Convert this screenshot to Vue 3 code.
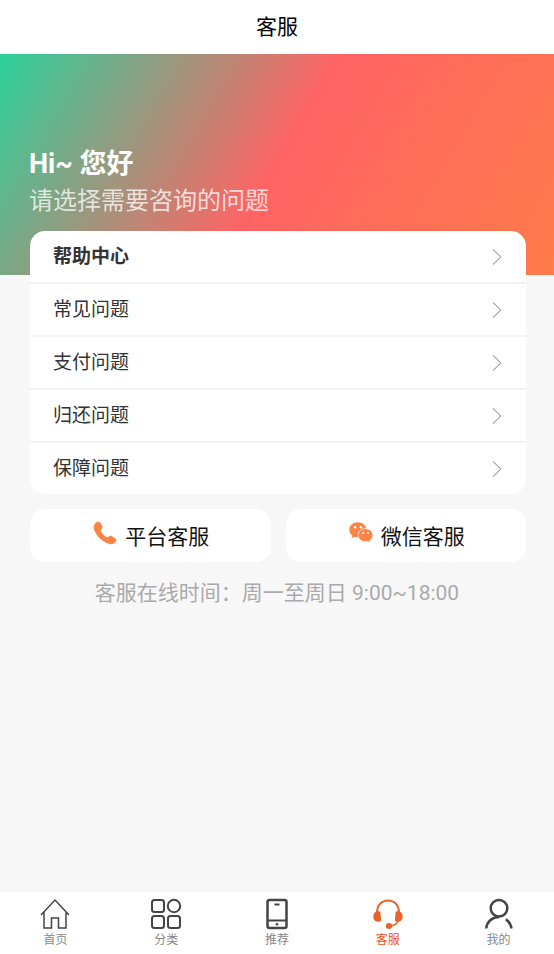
<script setup>
const questions = ['常见问题', '支付问题', '归还问题', '保障问题']
const tabs = [
  { id: 'home', label: '首页' },
  { id: 'category', label: '分类' },
  { id: 'recommend', label: '推荐' },
  { id: 'service', label: '客服' },
  { id: 'mine', label: '我的' },
]
const active = 'service'
</script>

<template>
  <div class="page">
    <header class="topbar"><h1>客服</h1></header>

    <main class="content">
      <section class="hero">
        <h2>Hi~ 您好</h2>
        <p>请选择需要咨询的问题</p>
      </section>

      <nav class="card" aria-label="帮助中心">
        <a class="row lead" href="#help">
          <span>帮助中心</span>
          <svg class="arrow" viewBox="0 0 10 18"><path d="M1 1.5 8.8 9 1 16.5" /></svg>
        </a>
        <a v-for="q in questions" :key="q" class="row" href="#question">
          <span>{{ q }}</span>
          <svg class="arrow" viewBox="0 0 10 18"><path d="M1 1.5 8.8 9 1 16.5" /></svg>
        </a>
      </nav>

      <div class="contacts">
        <button type="button" class="contact">
          <svg class="contact-icon" viewBox="0 0 24 24">
            <path d="M2.3 2.2C4 .5 6 .1 7.2 1.7L9 4.6c.9 1.5.5 2.7-.6 3.7-.8.8-.8 1.5-.2 2.5 1.3 2.2 2.9 3.8 5 5.1 1 .6 1.7.6 2.5-.2 1.1-1 2.4-1.2 3.7-.3l2.8 1.9c1.6 1.2 1.4 2.8-.1 4.3-1.7 1.7-4.2 2-7 .9C8.6 20 3.7 15.1 1.4 9.4.3 6.5.5 4 2.3 2.2Z" />
          </svg>
          <span>平台客服</span>
        </button>
        <button type="button" class="contact">
          <svg class="contact-icon" viewBox="0 0 24 24">
            <path d="M8.8 1.2C4 1.2.3 4.5.3 8.7c0 2.4 1.2 4.4 3.1 5.8l-.9 2.7 3.2-1.5c1 .3 2 .5 3.1.5 4.800 0 8.500-3.300 8.500-7.500s-3.700-7.500-8.500-7.500Z" />
            <path class="front" d="M16.6 7.700c-4.200 0-7.400 2.800-7.400 6.500s3.200 6.500 7.400 6.500c.9 0 1.700-.1 2.500-.4l2.700 1.500-.6-2.500c1.700-1.200 2.700-3 2.700-5.100 0-3.700-3.200-6.500-7.300-6.500Z" />
            <g class="eyes">
              <circle cx="6" cy="6.300" r="1.200" /><circle cx="11.800" cy="6.300" r="1.200" />
              <circle cx="14.200" cy="12" r="1.100" /><circle cx="19" cy="12" r="1.100" />
            </g>
          </svg>
          <span>微信客服</span>
        </button>
      </div>

      <p class="hours">客服在线时间：周一至周日 9:00~18:00</p>
    </main>

    <nav class="tabbar" aria-label="主导航">
      <a
        v-for="tab in tabs"
        :key="tab.id"
        :href="'#' + tab.id"
        class="tab"
        :class="[tab.id, { active: tab.id === active }]"
      >
        <svg v-if="tab.id === 'home'" class="tab-icon" viewBox="0 0 32 32">
          <path d="M2 17 16 2l14 15M5 14v16h7.500V20h7v10H27V14" />
        </svg>
        <svg v-else-if="tab.id === 'category'" class="tab-icon" viewBox="0 0 32 32">
          <rect x="2" y="2" width="12" height="12" rx="2.5" />
          <circle cx="24" cy="8" r="6.2" />
          <rect x="2" y="18" width="12" height="12" rx="2.5" />
          <rect x="18" y="18" width="12" height="12" rx="2.5" />
        </svg>
        <svg v-else-if="tab.id === 'recommend'" class="tab-icon" viewBox="0 0 32 32">
          <rect x="6.5" y="2" width="19" height="28" rx="2" />
          <path class="detail" d="M6.5 22.5h19M13.500 6.500h5" />
          <circle class="solid" cx="16" cy="26.300" r="1.3" />
        </svg>
        <svg v-else-if="tab.id === 'service'" class="tab-icon" viewBox="0 0 32 32">
          <path d="M5 15C5 7 9.500 2.500 16 2.500S27 7 27 15" />
          <path class="thin" d="M26.500 22c-1 3.500-3.500 5.500-8 6" />
          <path class="solid" d="M4.5 13.500 7 13.300c1 0 1.400.5 1.500 1.500l.6 7c.1 1.200-.4 1.900-1.600 1.900-4 .2-6.200-1.700-6.200-5 0-2.500 1-4.300 3.200-5.200ZM27.500 13.500 25 13.300c-1 0-1.400.5-1.500 1.500l-.6 7c-.1 1.200.4 1.900 1.600 1.900 4 .2 6.200-1.700 6.200-5 0-2.500-1-4.300-3.200-5.200Z" />
          <ellipse class="solid" cx="17" cy="28" rx="3.200" ry="2.900" />
        </svg>
        <svg v-else class="tab-icon" viewBox="0 0 32 32">
          <circle cx="16" cy="10.300" r="8.300" />
          <path d="M3.200 30.500C3.800 24 9 18.900 16 18.900M22.800 21.200c3 2 5 5.200 5.700 9.300" />
        </svg>
        <span>{{ tab.label }}</span>
      </a>
    </nav>
  </div>
</template>

<style>
body {
  background: #f7f7f7;
}
</style>

<style scoped>
.page {
  display: flex;
  flex-direction: column;
  min-height: 100vh;
  background: #f7f7f7;
  color: #222;
  font-family: Roboto, "Noto Sans CJK SC", sans-serif;
}
h1, h2, p {
  margin: 0;
  font-weight: 400;
}
a {
  color: inherit;
  text-decoration: none;
}
svg {
  fill: none;
  stroke: currentColor;
}
.topbar {
  display: flex;
  align-items: center;
  justify-content: center;
  height: 54px;
  background: #fff;
  color: #000;
}
h1 {
  font-size: 21px;
  line-height: 54px;
}
.content {
  flex: 1;
}
.hero {
  box-sizing: border-box;
  height: 221px;
  padding: 92px 29px 0;
  background: linear-gradient(120deg, #2bd19b 0%, #ff6464 50%, #ff7b4a 100%);
  color: #fff;
}
.hero h2 {
  font-size: 27px;
  font-weight: 700;
  line-height: 36px;
}
.hero p {
  font-size: 24px;
  line-height: 38px;
  color: rgba(255, 255, 255, 0.75);
}
.card {
  margin: -44px 28px 0 30px;
  border-radius: 15px;
  background: #fff;
  overflow: hidden;
}
.row {
  display: flex;
  align-items: center;
  justify-content: space-between;
  height: 51px;
  padding: 0 24px 0 23px;
  border-bottom: 2px solid #f2f2f2;
  color: #333;
  font-size: 19px;
}
.row span {
  padding-bottom: 4px;
}
.row:last-child {
  border-bottom: 0;
}
.lead {
  font-weight: 700;
}
.arrow {
  width: 10px;
  height: 18px;
  color: #777;
}
.contacts {
  display: flex;
  gap: 15px;
  margin: 15px 28px 0 30px;
}
.contact {
  display: flex;
  flex: 1;
  align-items: center;
  justify-content: center;
  gap: 8px;
  height: 53px;
  padding: 0 0 2px 2px;
  border: 0;
  border-radius: 15px;
  background: #fff;
  color: #111;
  font: inherit;
  font-size: 21px;
}
.contact-icon {
  width: 24px;
  height: 24px;
  margin-bottom: 4px;
  fill: #fc8444;
  stroke: none;
}
.front {
  stroke: #fff;
  stroke-width: 0.7;
}
.eyes {
  fill: #fff;
}
.hours {
  padding-top: 15px;
  color: #aaa;
  font-size: 21px;
  line-height: 32px;
  text-align: center;
}
.tabbar {
  display: flex;
  height: 62px;
  background: #fff;
}
.tab {
  display: flex;
  flex: 1;
  flex-direction: column;
  align-items: center;
  padding-top: 6px;
  color: #888;
  font-size: 12px;
  line-height: 20px;
}
.tab-icon {
  width: 32px;
  height: 32px;
  color: #444;
  stroke-width: 2;
}
.home .tab-icon {
  stroke-width: 1.5;
}
.recommend .tab-icon,
.mine .tab-icon {
  stroke-width: 2.5;
}
.detail {
  stroke-width: 2;
}
.active {
  color: #f0501e;
}
.active .tab-icon {
  color: #e8642c;
}
.thin {
  stroke-width: 1.5;
}
.solid {
  fill: currentColor;
  stroke: none;
}
</style>
